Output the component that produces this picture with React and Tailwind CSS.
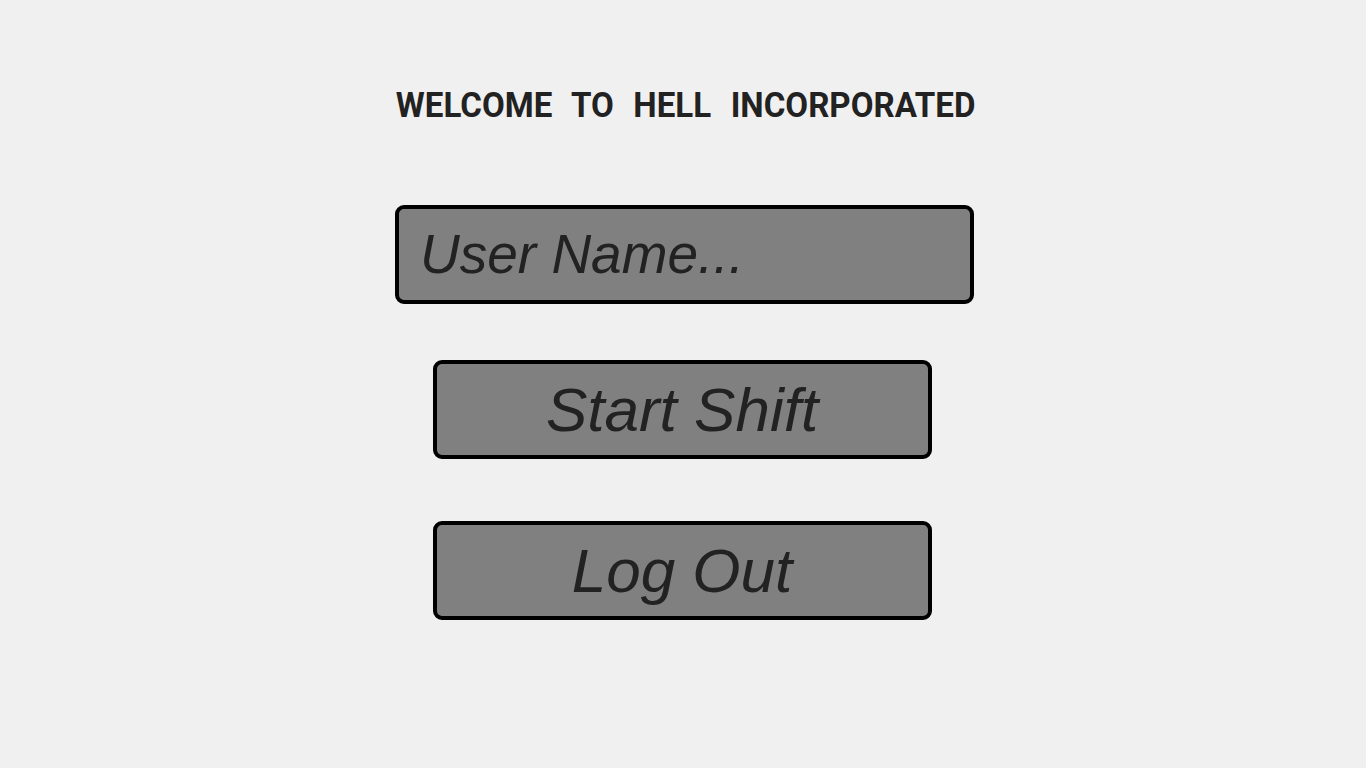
export default function App() {
  return (
    <div className="min-h-screen w-full bg-[#f0f0f0] flex flex-col items-center pt-[84px]">
      <h1 className="text-[35px] leading-[44px] font-bold text-[#222222] [word-spacing:12px] scale-x-[0.945] ml-[5px] font-['Roboto',Arial,sans-serif]">
        WELCOME TO HELL INCORPORATED
      </h1>

      <div className="mt-[77px] ml-[3px] w-[579px] h-[99px] rounded-[9px] border-4 border-black bg-[#808080] flex items-center px-[21px]">
        <input
          placeholder="User Name..."
          className="w-full bg-transparent outline-none italic text-[55px] text-[#222222] placeholder:text-[#222222] font-['Liberation_Sans',Arial,sans-serif]"
        />
      </div>

      <button className="mt-[56px] mr-[2px] w-[499px] h-[99px] rounded-[9px] border-4 border-black bg-[#808080] flex items-center justify-center italic text-[62px] text-[#222222] font-['Liberation_Sans',Arial,sans-serif]">
        Start Shift
      </button>

      <button className="mt-[62px] mr-[2px] w-[499px] h-[99px] rounded-[9px] border-4 border-black bg-[#808080] flex items-center justify-center italic text-[62px] text-[#222222] font-['Liberation_Sans',Arial,sans-serif]">
        Log Out
      </button>
    </div>
  )
}
